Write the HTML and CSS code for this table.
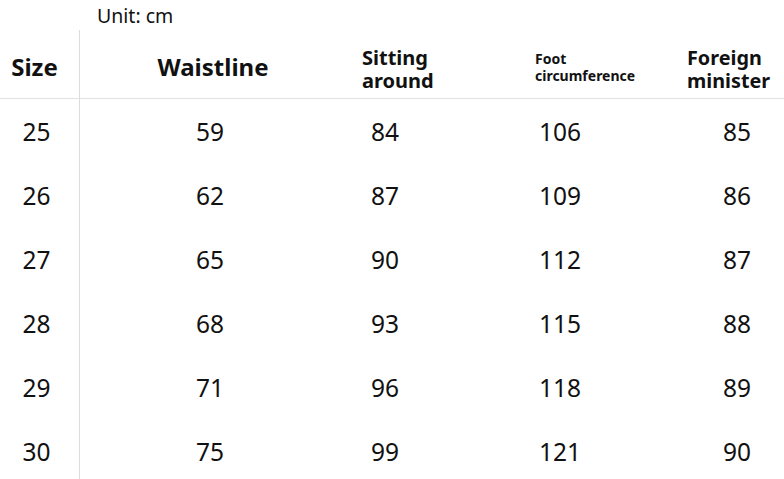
FILE: index.html
```html
<!DOCTYPE html>
<html>
<head>
<meta charset="utf-8">
<link rel="stylesheet" href="styles.css">
</head>
<body>
<div class="unit">Unit: cm</div>
<div class="chart">
  <div class="cell head first">Size</div>
  <div class="cell head waist">Waistline</div>
  <div class="cell head mid sit">Sitting<br>around</div>
  <div class="cell head small foot">Foot<br>circumference</div>
  <div class="cell head mid foreign">Foreign<br>minister</div>

  <div class="cell first">25</div><div class="cell">59</div><div class="cell">84</div><div class="cell">106</div><div class="cell">85</div>
  <div class="cell first">26</div><div class="cell">62</div><div class="cell">87</div><div class="cell">109</div><div class="cell">86</div>
  <div class="cell first">27</div><div class="cell">65</div><div class="cell">90</div><div class="cell">112</div><div class="cell">87</div>
  <div class="cell first">28</div><div class="cell">68</div><div class="cell">93</div><div class="cell">115</div><div class="cell">88</div>
  <div class="cell first">29</div><div class="cell">71</div><div class="cell">96</div><div class="cell">118</div><div class="cell">89</div>
  <div class="cell first">30</div><div class="cell">75</div><div class="cell">99</div><div class="cell">121</div><div class="cell">90</div>
</div>
</body>
</html>
```

FILE: styles.css
```css
html, body {
  margin: 0;
  padding: 0;
  background: #fff;
}
body {
  font-family: "Noto Sans", "Open Sans", sans-serif;
  color: #111;
  width: 784px;
  height: 479px;
  overflow: hidden;
}
.unit {
  height: 30px;
  padding-left: 97px;
  font-size: 19.5px;
  line-height: 32px;
  box-sizing: border-box;
}
.chart {
  display: grid;
  grid-template-columns: 80px 260px 90px 260px 94px;
  grid-template-rows: 69px repeat(6, 64px);
}
.cell {
  display: flex;
  align-items: center;
  justify-content: center;
  font-size: 24.5px;
}
.first {
  border-right: 1px solid #dcdcdc;
  padding-right: 6px;
}
.head {
  font-weight: 700;
  border-bottom: 1.5px solid #e2e2e2;
  padding-top: 4px;
  font-size: 24px;
  box-sizing: border-box;
}
.head.first {
  padding-right: 10px;
}
.waist {
  padding-left: 6px;
}
.mid {
  justify-content: flex-start;
  font-size: 20px;
  line-height: 23px;
  padding-top: 10px;
}
.sit {
  padding-left: 22px;
}
.foreign {
  padding-left: 0;
  margin-left: -3px;
  font-size: 19.8px;
}
.small {
  justify-content: flex-start;
  font-size: 14px;
  line-height: 17px;
  padding-left: 105px;
  padding-top: 6px;
}
```
